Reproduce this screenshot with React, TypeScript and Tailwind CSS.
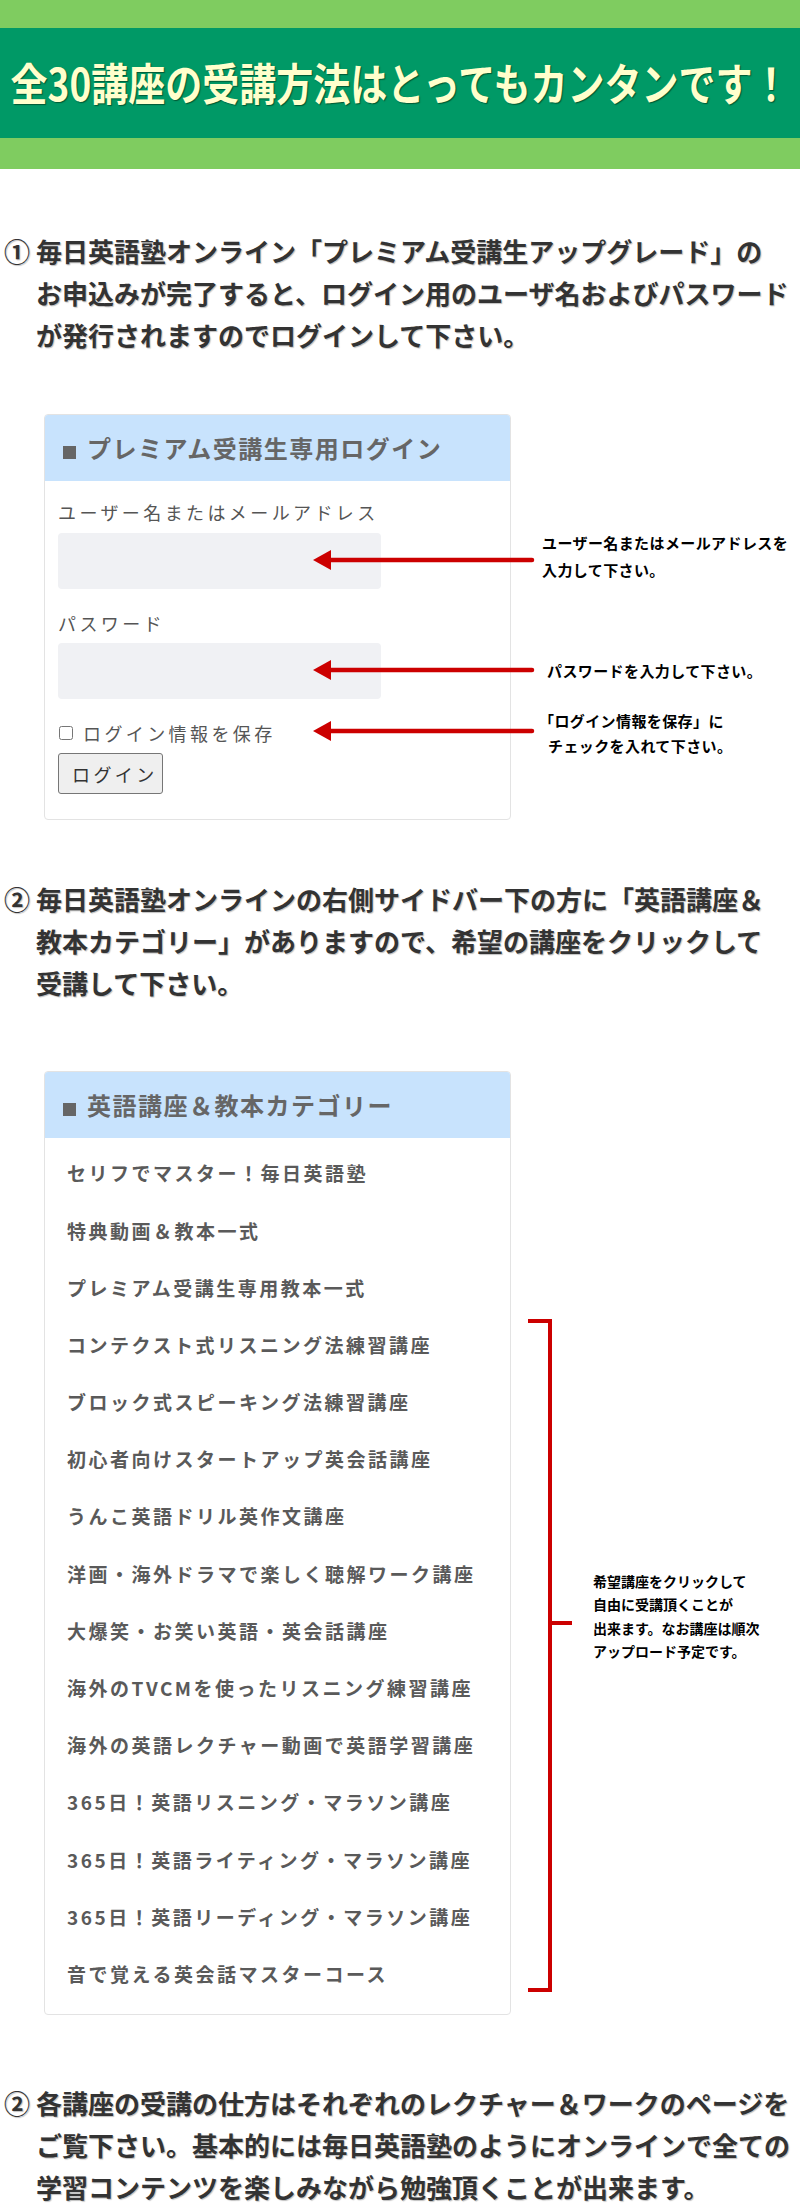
const fam = "font-['Noto_Sans_CJK_JP','Noto_Sans',sans-serif]";

function Step({ num, lines, className }: { num: string; lines: string[]; className: string }) {
  return (
    <div className={`flex pl-[4px] text-[26px] font-bold leading-[42px] text-[#333] [text-shadow:1px_1px_1px_rgba(0,0,0,0.25)] ${className}`}>
      <span className="w-[32px] shrink-0">{num}</span>
      <div>
        {lines.map((l) => (
          <div key={l} className="whitespace-nowrap">{l}</div>
        ))}
      </div>
    </div>
  );
}

function BoxHead({ title }: { title: string }) {
  return (
    <div className="h-[66px] bg-[#c8e3fd] flex items-center pl-[18px] text-[24px] font-bold tracking-[1.5px] text-[#666]">
      <span className="inline-block w-[13px] h-[13px] bg-[#666] mr-[11px] mt-[8px]"></span>
      {title}
    </div>
  );
}

const courses = [
  "セリフでマスター！毎日英語塾",
  "特典動画＆教本一式",
  "プレミアム受講生専用教本一式",
  "コンテクスト式リスニング法練習講座",
  "ブロック式スピーキング法練習講座",
  "初心者向けスタートアップ英会話講座",
  "うんこ英語ドリル英作文講座",
  "洋画・海外ドラマで楽しく聴解ワーク講座",
  "大爆笑・お笑い英語・英会話講座",
  "海外のTVCMを使ったリスニング練習講座",
  "海外の英語レクチャー動画で英語学習講座",
  "365日！英語リスニング・マラソン講座",
  "365日！英語ライティング・マラソン講座",
  "365日！英語リーディング・マラソン講座",
  "音で覚える英会話マスターコース",
];

function Arrow({ y }: { y: number }) {
  return (
    <g>
      <line x1={328} y1={y} x2={532} y2={y} stroke="#cc0000" strokeWidth={4.5} strokeLinecap="round" />
      <polygon points={`313,${y} 331,${y - 10} 331,${y + 10}`} fill="#cc0000" />
    </g>
  );
}

export default function App() {
  return (
    <div className={`w-[800px] bg-white ${fam}`}>
      {/* banner */}
      <div className="h-[28px] bg-[#7fcc60]"></div>
      <div className="h-[110px] bg-[#009966] flex items-center justify-center">
        <h1 className="text-[37px] font-bold text-[#ffffcc] whitespace-nowrap scale-y-[1.2] [text-shadow:1px_1px_1px_rgba(0,60,30,0.7)]">
          全30講座の受講方法はとってもカンタンです！
        </h1>
      </div>
      <div className="h-[31px] bg-[#7fcc60]"></div>

      <Step
        className="mt-[61px]"
        num="①"
        lines={[
          "毎日英語塾オンライン「プレミアム受講生アップグレード」の",
          "お申込みが完了すると、ログイン用のユーザ名およびパスワード",
          "が発行されますのでログインして下さい。",
        ]}
      />

      {/* login box */}
      <div className="relative mt-[58px] h-[406px]">
        <div className="ml-[44px] w-[467px] h-[406px] border border-[#e3e3e3] rounded-[4px] overflow-hidden">
          <BoxHead title="プレミアム受講生専用ログイン" />
          <div className="pl-[13px] pt-[18px] text-[18px] leading-[26px] tracking-[3.4px] text-[#555]">
            <div>ユーザー名またはメールアドレス</div>
            <input type="text" className="block mt-[8px] h-[56px] w-[323px] bg-[#f0f1f4] rounded-[4px] border-0 outline-none" />
            <div className="mt-[21px]">パスワード</div>
            <input type="password" className="block mt-[7px] h-[56px] w-[323px] bg-[#f0f1f4] rounded-[4px] border-0 outline-none" />
            <label className="mt-[21px] flex items-center">
              <input type="checkbox" className="w-[14px] h-[14px] ml-[1px] mr-[10px]" />
              ログイン情報を保存
            </label>
            <button className="block mt-[7px] h-[41px] w-[105px] bg-[#efefef] border border-[#767676] rounded-[3px] text-left pl-[13px] text-[#333]">
              ログイン
            </button>
          </div>
        </div>
        <svg className="absolute left-0 top-0 pointer-events-none" width="800" height="406">
          <Arrow y={146} />
          <Arrow y={256} />
          <Arrow y={317} />
        </svg>
        <div className="absolute left-[542px] top-[115px] text-[15px] font-bold leading-[27px] tracking-[0.4px] text-black">
          <div>ユーザー名またはメールアドレスを</div>
          <div>入力して下さい。</div>
        </div>
        <div className="absolute left-[547px] top-[243px] text-[15px] font-bold leading-[27px] tracking-[0.4px] text-black">
          パスワードを入力して下さい。
        </div>
        <div className="absolute left-[539px] top-[294px] text-[15px] font-bold leading-[25px] tracking-[0.4px] text-black">
          <div>「ログイン情報を保存」に</div>
          <div className="pl-[9px]">チェックを入れて下さい。</div>
        </div>
      </div>

      <Step
        className="mt-[58px]"
        num="②"
        lines={[
          "毎日英語塾オンラインの右側サイドバー下の方に「英語講座＆",
          "教本カテゴリー」がありますので、希望の講座をクリックして",
          "受講して下さい。",
        ]}
      />

      {/* category box */}
      <div className="relative mt-[67px]">
        <div className="ml-[44px] w-[467px] border border-[#e3e3e3] rounded-[4px] overflow-hidden">
          <BoxHead title="英語講座＆教本カテゴリー" />
          <ul className="pt-[7px] pb-[11px]">
            {courses.map((c) => (
              <li key={c} className="h-[57.2px] flex items-center pl-[22px] text-[19px] font-bold tracking-[2.5px] text-[#5a5a5a]">
                {c}
              </li>
            ))}
          </ul>
        </div>
        <svg className="absolute left-0 top-0 pointer-events-none" width="800" height="942">
          <path d="M528 250 H550 V919 H528 M550 552 H572" fill="none" stroke="#cc0000" strokeWidth={4} />
        </svg>
        <div className="absolute left-[593px] top-[499px] text-[14px] font-bold leading-[23.3px] text-black">
          <div>希望講座をクリックして</div>
          <div>自由に受講頂くことが</div>
          <div>出来ます。なお講座は順次</div>
          <div>アップロード予定です。</div>
        </div>
      </div>

      <Step
        className="mt-[67px] pb-[8px]"
        num="②"
        lines={[
          "各講座の受講の仕方はそれぞれのレクチャー＆ワークのページを",
          "ご覧下さい。基本的には毎日英語塾のようにオンラインで全ての",
          "学習コンテンツを楽しみながら勉強頂くことが出来ます。",
        ]}
      />
    </div>
  );
}
